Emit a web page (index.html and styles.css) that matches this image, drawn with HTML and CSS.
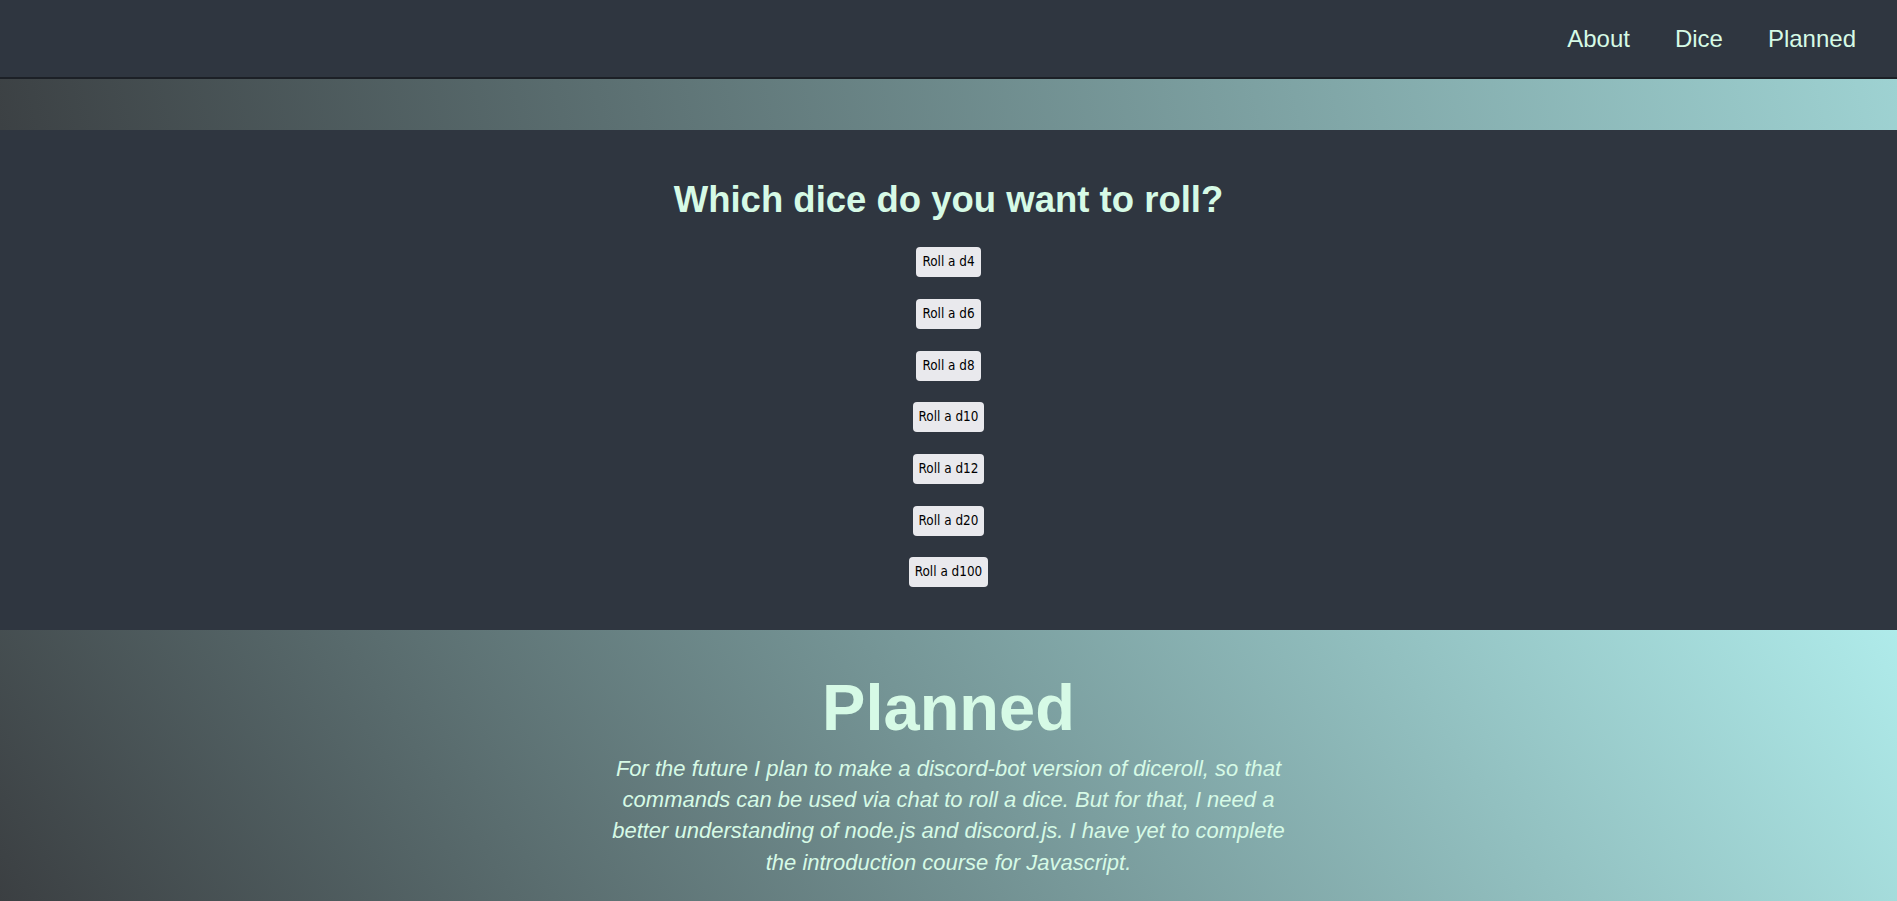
FILE: index.html
```html
<!DOCTYPE html>
<html lang="en">
<head>
<meta charset="utf-8">
<title>Diceroll</title>
<link rel="stylesheet" href="styles.css">
</head>
<body>
<nav class="topnav">
  <a class="navlink" href="#about">About</a>
  <a class="navlink" href="#dice">Dice</a>
  <a class="navlink" href="#planned">Planned</a>
</nav>
<div class="band"></div>
<section class="dice" id="dice">
  <h1 class="dice-title">Which dice do you want to roll?</h1>
  <div class="buttons">
    <button class="roll">Roll a d4</button>
    <button class="roll">Roll a d6</button>
    <button class="roll">Roll a d8</button>
    <button class="roll">Roll a d10</button>
    <button class="roll">Roll a d12</button>
    <button class="roll">Roll a d20</button>
    <button class="roll">Roll a d100</button>
  </div>
</section>
<section class="planned" id="planned">
  <h1 class="planned-title">Planned</h1>
  <p class="planned-text">For the future I plan to make a discord-bot version of diceroll, so that commands can be used via chat to roll a dice. But for that, I need a better understanding of node.js and discord.js. I have yet to complete the introduction course for Javascript.</p>
</section>
</body>
</html>
```
FILE: styles.css
```css
html, body {
  margin: 0;
  padding: 0;
}
body {
  background: #2f3640;
  font-family: "Liberation Sans", Arial, sans-serif;
  color: #d6fae6;
}
.topnav {
  height: 77px;
  background: #2f3640;
  display: flex;
  justify-content: flex-end;
  align-items: center;
  gap: 45px;
  padding-right: 41px;
}
.navlink {
  color: #d6fae6;
  text-decoration: none;
  font-size: 24px;
  line-height: 28px;
}
.band {
  height: 51px;
  border-top: 2px solid rgba(0, 0, 0, 0.4);
  background: linear-gradient(78deg, #3c4144 0%, #9ed2d2 100%);
  background-clip: padding-box;
  background-color: #3c4144;
}
.dice {
  background: #2f3640;
  padding: 48.5px 0 42.5px;
  text-align: center;
}
.dice-title {
  margin: 0 0 26.8px;
  font-size: 36.5px;
  line-height: 42px;
  font-weight: bold;
  color: #d6fae6;
}
.buttons {
  display: flex;
  flex-direction: column;
  align-items: center;
  gap: 21.7px;
}
.roll {
  font-family: "DejaVu Sans Condensed", "DejaVu Sans", sans-serif;
  font-size: 13.4px;
  line-height: 16px;
  padding: 7px 6px;
  border: 0;
  border-radius: 4px;
  background: #e9e9ed;
  color: #000;
}
.planned {
  background: linear-gradient(56deg, #3b3f42 0%, #afebea 100%);
  padding: 42.5px 0 24px;
  text-align: center;
}
.planned-title {
  margin: 0;
  font-size: 65px;
  line-height: 72px;
  font-weight: bold;
  color: #d6fae6;
}
.planned-text {
  max-width: 700px;
  margin: 8.5px auto 0;
  font-size: 22px;
  line-height: 31.2px;
  font-style: italic;
  color: #d6fae6;
}
```
